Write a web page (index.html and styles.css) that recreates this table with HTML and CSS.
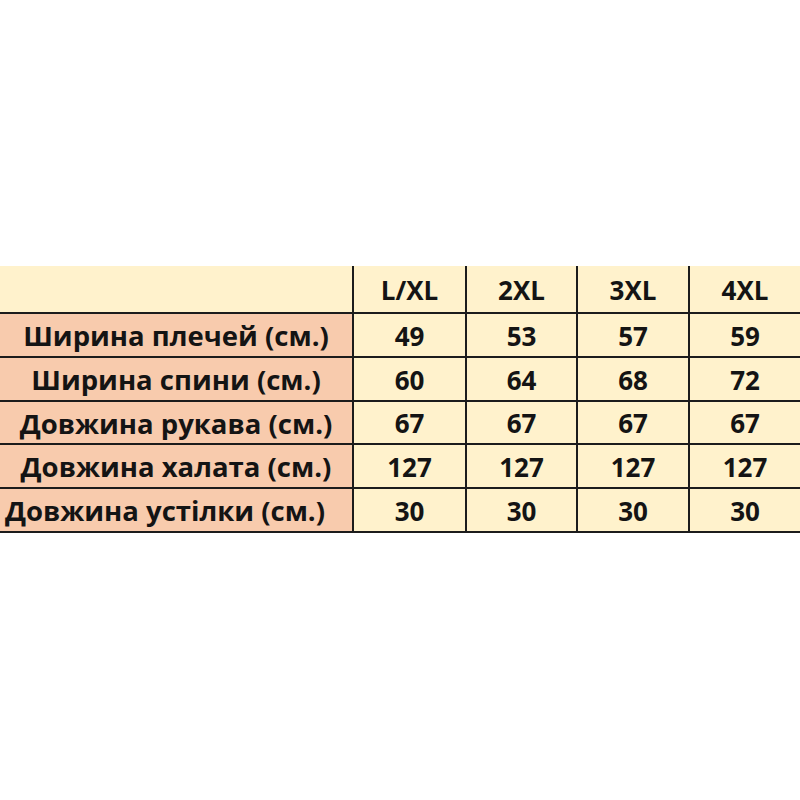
FILE: index.html
```html
<!DOCTYPE html>
<html lang="uk">
<head>
<meta charset="utf-8">
<link rel="stylesheet" href="styles.css">
<title>Розміри</title>
</head>
<body>
<div class="page">
  <div class="grid">
    <div class="cell head label"></div>
    <div class="cell head">L/XL</div>
    <div class="cell head">2XL</div>
    <div class="cell head">3XL</div>
    <div class="cell head">4XL</div>

    <div class="cell label">Ширина плечей (см.)</div>
    <div class="cell">49</div>
    <div class="cell">53</div>
    <div class="cell">57</div>
    <div class="cell">59</div>

    <div class="cell label">Ширина спини (см.)</div>
    <div class="cell">60</div>
    <div class="cell">64</div>
    <div class="cell">68</div>
    <div class="cell">72</div>

    <div class="cell label">Довжина рукава (см.)</div>
    <div class="cell">67</div>
    <div class="cell">67</div>
    <div class="cell">67</div>
    <div class="cell">67</div>

    <div class="cell label">Довжина халата (см.)</div>
    <div class="cell">127</div>
    <div class="cell">127</div>
    <div class="cell">127</div>
    <div class="cell">127</div>

    <div class="cell label last">Довжина устілки (см.)</div>
    <div class="cell">30</div>
    <div class="cell">30</div>
    <div class="cell">30</div>
    <div class="cell">30</div>
  </div>
</div>
</body>
</html>
```

FILE: styles.css
```css
html, body {
  margin: 0;
  padding: 0;
  background: #ffffff;
}
.page {
  width: 800px;
  height: 800px;
  padding-top: 266px;
  box-sizing: border-box;
}
.grid {
  display: grid;
  grid-template-columns: 352px 111px 109px 110px 110px;
  grid-template-rows: 46px 42px 42px 41px 42px 42px;
  gap: 2px;
  padding-bottom: 2px;
  background: #1c1c1c;
}
.cell {
  background: #fff2cc;
  display: flex;
  align-items: center;
  justify-content: center;
  font-family: "Open Sans", Lato, sans-serif;
  font-weight: 700;
  font-size: 26px;
  color: #141414;
  white-space: nowrap;
  padding-top: 1px;
  box-sizing: border-box;
  overflow: visible;
}
.label {
  background: #f8cbad;
  font-size: 27.5px;
}
.head.label {
  background: #fff2cc;
}
.last {
  padding-right: 22px;
}
```
